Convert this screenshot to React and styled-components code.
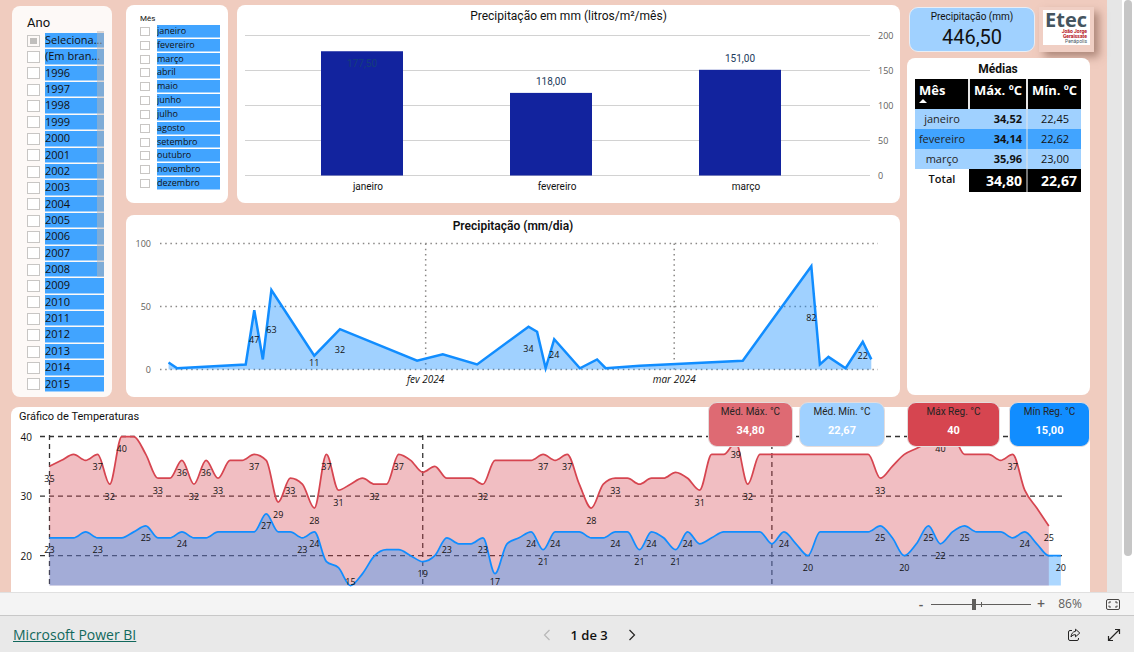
import { useState } from "react";
import styled, { createGlobalStyle } from "styled-components";

const GlobalStyle = createGlobalStyle`
  * {
    box-sizing: border-box;
  }
  body {
    margin: 0;
    background: #ffffff;
    font-family: "Open Sans", "Noto Sans", sans-serif;
    color: #111111;
  }
  h1, h2, p, ul {
    margin: 0;
    padding: 0;
    list-style: none;
  }
  button {
    padding: 0;
    border: 0;
    background: none;
    color: inherit;
    font: inherit;
    cursor: pointer;
  }
`;

const din = `Roboto, "Open Sans", sans-serif`;
const segoe = `"Open Sans", "Noto Sans", sans-serif`;

const Page = styled.div`
  display: flex;
  flex-direction: column;
  height: 100vh;
`;

const Viewport = styled.main`
  display: flex;
  flex: 1;
  min-height: 0;
  overflow: hidden;
  background: #e6e6e6;
`;

const Canvas = styled.div`
  display: flex;
  flex: 1;
  flex-direction: column;
  gap: 10px;
  min-width: 0;
  margin-right: 15px;
  padding: 5px 17px 0 11px;
  background: #f0ccbf;
`;

const ScrollTrack = styled.div`
  flex: none;
  width: 12px;
  padding: 0 2px;
  background: #ffffff;
`;

const ScrollThumb = styled.div`
  height: 94%;
  border-radius: 4px;
  background: #c6c6c6;
`;

const Board = styled.div`
  display: flex;
  padding-left: 1px;
`;

const Middle = styled.div`
  display: flex;
  flex: 1;
  flex-direction: column;
  gap: 12px;
  min-width: 0;
  margin: 0 7px 0 14px;
`;

const TopRow = styled.div`
  display: flex;
  gap: 9px;
`;

const Side = styled.div`
  display: flex;
  flex: none;
  flex-direction: column;
  gap: 6px;
  width: 183px;
  padding-bottom: 2px;
`;

const Card = styled.section`
  min-width: 0;
  border-radius: 8px;
  background: #ffffff;
`;

const ChartCard = styled(Card)`
  flex: 1;
  overflow: hidden;
`;

const ChartTitle = styled.h2`
  padding-top: 3px;
  font: ${(p) => (p.$bold ? 600 : 400)} 12px/16px ${din};
  text-align: center;
`;

const Plot = styled.svg`
  display: block;
  width: 100%;
  height: auto;
`;

const Slicer = styled.fieldset`
  position: relative;
  display: flex;
  flex: none;
  flex-direction: column;
  width: ${(p) => (p.$small ? 102 : 100)}px;
  min-width: 0;
  margin: ${(p) => (p.$small ? 0 : "1px 0 0")};
  padding: ${(p) => (p.$small ? "8px 8px 12px 14px" : "9px 8px 4px 15px")};
  border: 0;
  border-radius: 8px;
  background: ${(p) => (p.$small ? "#ffffff" : "#fdf9f7")};
`;

const SlicerTitle = styled.h2`
  padding-bottom: ${(p) => (p.$small ? 1 : 2)}px;
  font: 400 ${(p) => (p.$small ? "8px/11px" : "13px/16px")} ${din};
`;

const SlicerList = styled.ul`
  display: flex;
  flex: 1;
  flex-direction: column;
`;

const SlicerItem = styled.li`
  flex: 1;
  padding-bottom: 1px;
`;

const SlicerLabel = styled.label`
  display: flex;
  align-items: center;
  gap: ${(p) => (p.$small ? 7 : 5)}px;
  height: 100%;
`;

const Check = styled.input`
  flex: none;
  width: ${(p) => (p.$small ? 10 : 13)}px;
  height: ${(p) => (p.$small ? 9 : 12)}px;
  margin: 0;
  border: 1px solid #c8c6c4;
  background: #ffffff;
  appearance: none;

  &:indeterminate {
    padding: 2px;
    background: #c0bebc content-box;
  }
`;

const SlicerText = styled.span`
  flex: 1;
  height: 100%;
  min-width: 0;
  overflow: hidden;
  border-bottom: 1px solid #a0d1ff;
  background: #41a4ff;
  font: 400 ${(p) => (p.$small ? "9px/11px" : "11px/14px")} ${segoe};
  white-space: nowrap;
`;

const SlicerScroll = styled.div`
  position: absolute;
  top: 25px;
  right: 8px;
  width: 7px;
  height: 246px;
  background: rgba(190, 180, 175, 0.5);
`;

const SideTop = styled.div`
  display: flex;
  gap: 4px;
  padding: 2px 0 0 2px;
`;

const TotalCard = styled.section`
  flex: 1;
  height: 45px;
  padding-top: 2px;
  border: 1px solid #e8eef6;
  border-radius: 9px;
  background: #a0d1ff;
  text-align: center;
`;

const TotalTitle = styled.h2`
  font: 400 10px/14px ${din};
`;

const TotalValue = styled.p`
  font: 400 20px/26px ${din};
`;

const Logo = styled.div`
  flex: none;
  width: 55px;
  height: 45px;
  margin-right: -4px;
  padding: 3px 4px 7px;
  background: #f0cfc4;
  box-shadow: 5px 5px 8px rgba(110, 70, 55, 0.5);
`;

const LogoPlate = styled.div`
  height: 35px;
  padding-right: 3px;
  background: #ffffff;
  color: #b5121b;
  font: 700 5px/5px ${din};
  text-align: right;
`;

const LogoName = styled.div`
  color: #455560;
  font: 700 20px/19px ${segoe};
`;

const LogoFoot = styled.div`
  color: #455560;
  font-weight: 400;
`;

const AverageCard = styled(Card)`
  flex: 1;
  padding: 2px 9px 0 8px;
`;

const AverageTable = styled.table`
  width: 100%;
  border-collapse: collapse;
  table-layout: fixed;
  font: 400 11px/20px ${segoe};

  caption {
    padding-bottom: 1px;
    font: 700 12px/18px ${din};
  }
  th,
  td {
    padding: 0;
  }
  thead th {
    height: 30px;
    padding-top: 3px;
    border-right: 2px solid #e6e6e6;
    background: #000000;
    color: #ffffff;
    font: 700 13px/16px ${segoe};
    vertical-align: top;
    white-space: nowrap;
  }
  thead th:first-child {
    padding-left: 4px;
    text-align: left;
  }
  thead th:nth-child(2) {
    width: 35%;
  }
  thead th:last-child {
    border-right: 0;
  }
  tbody tr {
    background: #a0d1ff;
  }
  tbody tr:nth-child(2) {
    background: #41a4ff;
  }
  tbody th {
    font-weight: 400;
    color: #252423;
  }
  td {
    border-right: 2px solid rgba(230, 230, 230, 0.5);
    padding-right: 4px;
    font-weight: 700;
    text-align: right;
  }
  td:last-child {
    padding-right: 12px;
    border-right: 0;
    font-weight: 500;
  }
  tfoot th {
    font: 600 11px/20px ${segoe};
    vertical-align: top;
  }
  tfoot td,
  tfoot td:last-child {
    height: 23px;
    padding-right: 4px;
    background: #000000;
    color: #ffffff;
    font-size: 14px;
    font-weight: 700;
  }
`;

const SortMark = styled.span`
  display: block;
  width: 0;
  border: 4px solid transparent;
  border-top: 0;
  border-bottom-color: #ffffff;
  margin-top: 1px;
`;

const TemperatureCard = styled(Card)`
  position: relative;
  flex: 1;
  border-radius: 8px 8px 0 0;
`;

const TemperatureTitle = styled.h2`
  padding: 2px 8px 0;
  font: 400 11px/16px ${din};
`;

const KpiRow = styled.div`
  position: absolute;
  top: -5px;
  right: 0;
  display: flex;
`;

const Kpi = styled.section`
  width: ${(p) => p.$width}px;
  height: 45px;
  margin-left: ${(p) => p.$gap}px;
  padding-top: 1px;
  border: 1px solid #e4dcdc;
  border-radius: 9px;
  background: ${(p) => p.$color};
  text-align: center;
`;

const KpiTitle = styled.h2`
  color: #252423;
  font: 400 10px/15px ${din};
`;

const KpiValue = styled.p`
  padding-top: 3px;
  color: #ffffff;
  font: 700 11px/18px ${din};
`;

const ZoomBar = styled.div`
  display: flex;
  flex: none;
  align-items: center;
  justify-content: flex-end;
  height: 24px;
  padding-right: 14px;
  border-top: 1px solid #e0e0e0;
  border-bottom: 1px solid #c8c8c8;
  background: #f4f4f4;
  color: #605e5c;
  font: 400 12px/16px ${segoe};
`;

const ZoomButton = styled.button`
  width: 14px;
  font-size: 14px;
  font-weight: 600;
  line-height: 16px;
`;

const ZoomRange = styled.input`
  width: 100px;
  height: 12px;
  margin: 0 3px;
  appearance: none;
  background: linear-gradient(#605e5c, #605e5c) 50px 50% / 1px 5px no-repeat,
    linear-gradient(#605e5c, #605e5c) 0 50% / 100% 1px no-repeat;

  &::-webkit-slider-thumb {
    width: 4px;
    height: 11px;
    appearance: none;
    background: #605e5c;
  }
`;

const ZoomValue = styled.output`
  width: 30px;
  margin: 0 21px 0 7px;
  text-align: center;
`;

const IconButton = styled.button`
  display: grid;
  place-items: center;
  width: ${(p) => p.$width || 40}px;
  color: ${(p) => (p.disabled ? "#b8b8b8" : "#252423")};
`;

const Footer = styled.footer`
  display: flex;
  flex: none;
  align-items: center;
  justify-content: space-between;
  height: 36px;
  padding: 2px 0 0 13px;
  background: #e9e9e9;
`;

const BrandLink = styled.a`
  color: #11685c;
  font-size: 14px;
  line-height: 20px;
  text-decoration: underline;
`;

const Pager = styled.nav`
  display: flex;
  align-items: center;
  gap: 20px;
  margin-right: 12px;
  font: 600 13px/20px ${segoe};
`;

const FooterActions = styled.div`
  display: flex;
`;

const Label = styled.text`
  fill: ${(p) => p.$fill || "#111111"};
  font: ${(p) => (p.$italic ? "italic" : "normal")} 400 ${(p) => p.$size || 9}px ${(p) => (p.$din ? din : segoe)};
  text-anchor: ${(p) => p.$anchor || "middle"};
  dominant-baseline: central;
`;

const years = Array.from({ length: 20 }, (_, i) => String(1996 + i));
const yearItems = ["Seleciona...", "(Em bran...", ...years];
const monthItems = [
  "janeiro", "fevereiro", "março", "abril", "maio", "junho",
  "julho", "agosto", "setembro", "outubro", "novembro", "dezembro",
];

const monthTotals = [
  { name: "janeiro", value: 177.5, text: "177,50", x: 84 },
  { name: "fevereiro", value: 118, text: "118,00", x: 273 },
  { name: "março", value: 151, text: "151,00", x: 462 },
];

const averages = [
  ["janeiro", "34,52", "22,45"],
  ["fevereiro", "34,14", "22,62"],
  ["março", "35,96", "23,00"],
];

// [day of the year, mm]
const rain = [
  [1, 5.5], [2, 1], [10, 4], [11, 47], [12, 8], [13, 63], [18, 11], [21, 32],
  [30, 7], [33, 12], [37, 4], [43, 34], [44, 30], [45, 1], [46, 24], [49, 1],
  [51, 8], [52, 1], [56, 3], [68, 7], [76, 82], [77, 4], [78, 10], [80, 1],
  [82, 22], [83, 8],
];
const rainLabels = [11, 13, 18, 21, 43, 46, 76, 82];

const maxTemps = [
  35, 36, 37, 36, 37, 32, 40, 40, 37, 33, 33, 36, 32, 36, 33, 36, 36, 37, 36, 29,
  33, 32, 28, 37, 31, 32, 33, 32, 32, 37, 36, 34, 35, 33, 33, 33, 32, 36, 36, 36,
  36, 37, 36, 37, 32, 28, 32, 33, 33, 32, 33, 33, 34, 33, 31, 37, 37, 39, 32, 37,
  37, 37, 37, 37, 37, 37, 37, 37, 37, 33, 35, 37, 38, 39, 40, 40, 37, 37, 37, 36,
  37, 31, 28, 25,
];
const maxLabels = [
  0, 4, 5, 6, 9, 11, 12, 13, 14, 17, 19, 20, 22, 23, 24, 27, 29, 36, 41, 43, 45,
  47, 54, 57, 58, 69, 74, 80, 83,
];
const minTemps = [
  23, 23, 23, 24, 23, 23, 23, 24, 25, 23, 23, 24, 23, 23, 24, 24, 24, 24, 27, 24,
  24, 23, 24, 19, 18, 15, 17, 20, 21, 21, 20, 19, 20, 23, 22, 22, 23, 17, 22, 23,
  24, 21, 24, 24, 24, 23, 23, 24, 24, 21, 24, 23, 21, 24, 22, 23, 24, 24, 24, 24,
  22, 24, 22, 20, 24, 24, 24, 24, 24, 25, 23, 20, 22, 25, 22, 24, 25, 24, 24, 24,
  23, 24, 22, 20, 20,
];
const minLabels = [
  0, 4, 8, 11, 18, 21, 22, 25, 31, 33, 36, 37, 40, 41, 42, 47, 49, 50, 52, 53, 61,
  63, 69, 71, 73, 74, 76, 81, 84,
];

// Monotone cubic curve through equally spaced points
function monotonePath(points) {
  const last = points.length - 1;
  const slope = (i) =>
    (points[i + 1][1] - points[i][1]) / (points[i + 1][0] - points[i][0]);
  const tangent = (i) => {
    if (i === 0) return slope(0);
    if (i === last) return slope(last - 1);
    const a = slope(i - 1);
    const b = slope(i);
    if (a * b <= 0) return 0;
    return Math.sign(a) * Math.min(Math.abs(a), Math.abs(b), Math.abs(a + b) / 4) * 2;
  };
  let d = `M${points[0].join(",")}`;
  for (let i = 0; i < last; i++) {
    const [x0, y0] = points[i];
    const [x1, y1] = points[i + 1];
    const h = (x1 - x0) / 3;
    d += `C${x0 + h},${y0 + tangent(i) * h} ${x1 - h},${y1 - tangent(i + 1) * h} ${x1},${y1}`;
  }
  return d;
}

function SlicerCard({ title, items, small }) {
  const partial = (el) => {
    if (el) el.indeterminate = true;
  };
  return (
    <Slicer $small={small} aria-label={title}>
      <SlicerTitle $small={small}>{title}</SlicerTitle>
      <SlicerList>
        {items.map((item, i) => (
          <SlicerItem key={item}>
            <SlicerLabel $small={small}>
              <Check
                type="checkbox"
                $small={small}
                ref={!small && i === 0 ? partial : undefined}
              />
              <SlicerText $small={small}>{item}</SlicerText>
            </SlicerLabel>
          </SlicerItem>
        ))}
      </SlicerList>
      {!small && <SlicerScroll />}
    </Slicer>
  );
}

function MonthlyRain() {
  const y = (v) => 151.5 - v * 0.7;
  return (
    <ChartCard>
      <ChartTitle>Precipitação em mm (litros/m²/mês)</ChartTitle>
      <Plot viewBox="0 0 663 179">
        {[0, 50, 100, 150, 200].map((v) => (
          <g key={v}>
            <line x1="8" x2="633" y1={y(v)} y2={y(v)} stroke="#d2d2d2" />
            <Label x="641" y={y(v)} $anchor="start" $fill="#605e5c">
              {v}
            </Label>
          </g>
        ))}
        {monthTotals.map((m) => (
          <g key={m.name}>
            <rect x={m.x} y={y(m.value)} width="82" height={m.value * 0.7} fill="#12239e" />
            <Label
              x={m.x + 41}
              y={m.value > 160 ? y(m.value) + 12 : y(m.value) - 11}
              $din
              $size={10}
              $fill={m.value > 160 ? "#143f7a" : "#1b3a5c"}
            >
              {m.text}
            </Label>
            <Label x={m.x + 47} y="162" $size={10} $din>
              {m.name}
            </Label>
          </g>
        ))}
      </Plot>
    </ChartCard>
  );
}

function DailyRain() {
  const x = (day) => 34 + day * 8.57;
  const y = (v) => 135.5 - v * 1.26;
  const line = rain.map(([d, v]) => `${x(d)},${y(v)}`).join(" ");
  return (
    <ChartCard>
      <ChartTitle $bold>Precipitação (mm/dia)</ChartTitle>
      <Plot viewBox="0 0 774 163">
        <g stroke="#8a8886" strokeWidth="1.5" strokeDasharray="1.5 3.7">
          {[0, 50, 100].map((v) => (
            <line key={v} x1="34" x2="752" y1={y(v)} y2={y(v)} />
          ))}
          <line x1={x(31)} x2={x(31)} y1={y(100)} y2={y(0)} />
          <line x1={x(60)} x2={x(60)} y1={y(100)} y2={y(0)} />
        </g>
        {[0, 50, 100].map((v) => (
          <Label key={v} x="25" y={y(v)} $anchor="end" $fill="#605e5c">
            {v}
          </Label>
        ))}
        <polygon
          points={`${x(1)},${y(0)} ${line} ${x(83)},${y(0)}`}
          fill="#118dff"
          fillOpacity="0.4"
        />
        <polyline points={line} fill="none" stroke="#118dff" strokeWidth="2.5" />
        {rain
          .filter(([d]) => rainLabels.includes(d))
          .map(([d, v]) => (
            <Label key={d} x={x(d)} y={y(v / 2)}>
              {v}
            </Label>
          ))}
        <Label x={x(31)} y="145" $size={10} $italic>
          fev 2024
        </Label>
        <Label x={x(60)} y="145" $size={10} $italic>
          mar 2024
        </Label>
      </Plot>
    </ChartCard>
  );
}

function Temperatures() {
  const x = (day) => 38.5 + day * 12.04;
  const y = (v) => 11.5 + (40 - v) * 5.96;
  const toPoints = (values) => values.map((v, i) => [x(i), y(v)]);
  const area = (values) =>
    `${monotonePath(toPoints(values))}L${x(values.length - 1)},${y(15)}L${x(0)},${y(15)}Z`;
  const series = [
    { name: "max", values: maxTemps, labels: maxLabels, color: "#d64550" },
    { name: "min", values: minTemps, labels: minLabels, color: "#118dff" },
  ];
  return (
    <TemperatureCard>
      <TemperatureTitle>Gráfico de Temperaturas</TemperatureTitle>
      <Plot viewBox="0 0 1079 165">
        <g stroke="#333333" strokeWidth="1.3" strokeDasharray="5 4">
          {[40, 30, 20].map((v) => (
            <line key={v} x1="29" x2="1055" y1={y(v)} y2={y(v)} />
          ))}
          {[0, 31, 60].map((d) => (
            <line key={d} x1={x(d)} x2={x(d)} y1="10" y2={y(15)} />
          ))}
        </g>
        {[40, 30, 20].map((v) => (
          <Label key={v} x="21" y={y(v)} $size={10} $anchor="end">
            {v}
          </Label>
        ))}
        {series.map((s) => (
          <g key={s.name}>
            <path d={area(s.values)} fill={s.color} fillOpacity="0.35" />
            <path
              d={monotonePath(toPoints(s.values))}
              fill="none"
              stroke={s.color}
              strokeWidth="1.75"
            />
          </g>
        ))}
        {series.map((s) =>
          s.labels.map((d) => (
            <Label key={s.name + d} x={x(d)} y={Math.min(y(s.values[d]) + 12, 156)}>
              {s.values[d]}
            </Label>
          ))
        )}
      </Plot>
      <KpiRow>
        <Kpi $width={85} $color="#de6a73">
          <KpiTitle>Méd. Máx. °C</KpiTitle>
          <KpiValue>34,80</KpiValue>
        </Kpi>
        <Kpi $width={86} $gap={6} $color="#a0d1ff">
          <KpiTitle>Méd. Mín. °C</KpiTitle>
          <KpiValue>22,67</KpiValue>
        </Kpi>
        <Kpi $width={93} $gap={22} $color="#d64550">
          <KpiTitle>Máx Reg. °C</KpiTitle>
          <KpiValue>40</KpiValue>
        </Kpi>
        <Kpi $width={81} $gap={9} $color="#118dff">
          <KpiTitle>Mín Reg. °C</KpiTitle>
          <KpiValue>15,00</KpiValue>
        </Kpi>
      </KpiRow>
    </TemperatureCard>
  );
}

function Averages() {
  return (
    <AverageCard>
      <AverageTable>
        <caption>Médias</caption>
        <thead>
          <tr>
            <th scope="col">
              Mês
              <SortMark />
            </th>
            <th scope="col">Máx. ºC</th>
            <th scope="col">Mín. ºC</th>
          </tr>
        </thead>
        <tbody>
          {averages.map(([month, max, min]) => (
            <tr key={month}>
              <th scope="row">{month}</th>
              <td>{max}</td>
              <td>{min}</td>
            </tr>
          ))}
        </tbody>
        <tfoot>
          <tr>
            <th scope="row">Total</th>
            <td>34,80</td>
            <td>22,67</td>
          </tr>
        </tfoot>
      </AverageTable>
    </AverageCard>
  );
}

function Chevron({ left }) {
  return (
    <svg width="8" height="12" viewBox="0 0 8 12" fill="none" stroke="currentColor">
      <path d={left ? "M6.5 1 1.5 6l5 5" : "M1.5 1l5 5-5 5"} strokeWidth="1.2" />
    </svg>
  );
}

function App() {
  const [zoom, setZoom] = useState(43);
  const step = (by) => setZoom((z) => Math.max(0, Math.min(100, z + by)));

  return (
    <Page>
      <GlobalStyle />
      <Viewport>
        <Canvas>
          <Board>
            <SlicerCard title="Ano" items={yearItems} />
            <Middle>
              <TopRow>
                <SlicerCard title="Mês" items={monthItems} small />
                <MonthlyRain />
              </TopRow>
              <DailyRain />
            </Middle>
            <Side>
              <SideTop>
                <TotalCard>
                  <TotalTitle>Precipitação (mm)</TotalTitle>
                  <TotalValue>446,50</TotalValue>
                </TotalCard>
                <Logo>
                  <LogoPlate>
                    <LogoName>Etec</LogoName>
                    <div>João Jorge</div>
                    <div>Geraissate</div>
                    <LogoFoot>Penápolis</LogoFoot>
                  </LogoPlate>
                </Logo>
              </SideTop>
              <Averages />
            </Side>
          </Board>
          <Temperatures />
        </Canvas>
        <ScrollTrack>
          <ScrollThumb />
        </ScrollTrack>
      </Viewport>
      <ZoomBar>
        <ZoomButton type="button" aria-label="Reduzir" onClick={() => step(-5)}>
          -
        </ZoomButton>
        <ZoomRange
          type="range"
          aria-label="Zoom"
          value={zoom}
          onChange={(e) => setZoom(Number(e.target.value))}
        />
        <ZoomButton type="button" aria-label="Ampliar" onClick={() => step(5)}>
          +
        </ZoomButton>
        <ZoomValue>{zoom + 43}%</ZoomValue>
        <IconButton type="button" $width={14} aria-label="Ajustar à página">
          <svg width="14" height="11" viewBox="0 0 14 11" fill="none" stroke="#484644">
            <rect x="0.5" y="0.5" width="13" height="10" rx="1.5" />
            <path d="M3 4.5V3h2M9 3h2v1.5M11 6.5V8H9M5 8H3V6.5" />
          </svg>
        </IconButton>
      </ZoomBar>
      <Footer>
        <BrandLink href="#powerbi">Microsoft Power BI</BrandLink>
        <Pager aria-label="Páginas">
          <IconButton type="button" $width={8} disabled aria-label="Página anterior">
            <Chevron left />
          </IconButton>
          <span>1 de 3</span>
          <IconButton type="button" $width={8} aria-label="Próxima página">
            <Chevron />
          </IconButton>
        </Pager>
        <FooterActions>
          <IconButton type="button" aria-label="Compartilhar">
            <svg width="14" height="14" viewBox="0 0 14 14" fill="none" stroke="currentColor">
              <path d="M5 2.5H3A1.5 1.5 0 0 0 1.5 4v7A1.5 1.5 0 0 0 3 12.500h7a1.5 1.5 0 0 0 1.5-1.5v-1" />
              <path
                d="M8.5 1.2 12.8 5 8.5 8.8V6.7C6.5 6.6 5.2 7.3 4 9c.2-3 1.7-5.3 4.5-5.700z"
                strokeLinejoin="round"
              />
            </svg>
          </IconButton>
          <IconButton type="button" aria-label="Tela inteira">
            <svg width="14" height="14" viewBox="0 0 14 14" fill="none" stroke="currentColor">
              <path d="M1.5 12.5l11-11M8 1.5h4.5V6M1.5 8v4.5H6" strokeWidth="1.2" />
            </svg>
          </IconButton>
        </FooterActions>
      </Footer>
    </Page>
  );
}

export default App;
